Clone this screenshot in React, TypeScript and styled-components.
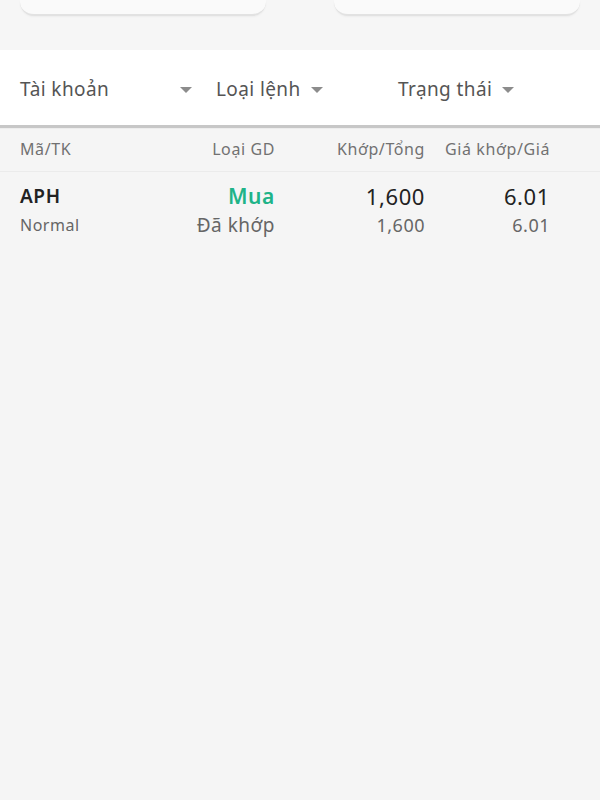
import React from "react"
import styled, { createGlobalStyle } from "styled-components"

const GlobalStyle = createGlobalStyle`
    html, body {
        margin: 0;
        padding: 0;
        background: #f5f5f5;
    }
    body {
        font-family: "Noto Sans", "Open Sans", sans-serif;
    }
`

const Page = styled.div({
    width: "600px",
    minHeight: "800px",
    backgroundColor: "#f5f5f5",
    display: "flex",
    flexDirection: "column"
})

const SearchArea = styled.div({
    height: "50px",
    backgroundColor: "#f6f6f6",
    display: "flex",
    justifyContent: "space-between",
    padding: "0 20px 0 20px",
    boxSizing: "border-box"
})

const SearchBox = styled.div({
    width: "246px",
    height: "14px",
    backgroundColor: "#fafafa",
    borderBottom: "2px solid #e2e2e2",
    borderRadius: "0 0 14px 14px",
    boxShadow: "0 1px 2px rgba(0, 0, 0, 0.04)"
})

const FilterBar = styled.div({
    height: "78px",
    backgroundColor: "#ffffff",
    borderBottom: "3px solid #c7c7c7",
    display: "flex",
    alignItems: "center",
    paddingTop: "3px",
    boxSizing: "border-box"
})

const Filter = styled.div<{ width: number, spread?: boolean, start: number }>(({ width, spread, start }) => ({
    width: `${width}px`,
    paddingLeft: `${start}px`,
    boxSizing: "border-box",
    display: "flex",
    alignItems: "center",
    justifyContent: spread ? "space-between" : "flex-start",
    gap: "10px",
    color: "#555",
    fontSize: "19px",
    letterSpacing: "0.4px"
}))

const Caret = styled.span({
    width: 0,
    height: 0,
    borderLeft: "6px solid transparent",
    borderRight: "6px solid transparent",
    borderTop: "6px solid #8c8c8c",
    marginTop: "1px"
})

const Grid = styled.div({
    display: "grid",
    gridTemplateColumns: "1fr 110px 150px 125px",
    padding: "0 50px 0 20px"
})

const HeaderRow = styled(Grid)({
    height: "40px",
    alignItems: "center",
    borderTop: "1px solid #ededed",
    borderBottom: "1px solid #ebebeb",
    color: "#717171",
    fontSize: "16px",
    letterSpacing: "0.6px",
    paddingBottom: "2px"
})

const Cell = styled.div<{ right?: boolean }>(({ right }) => ({
    textAlign: right ? "right" : "left",
    whiteSpace: "nowrap"
}))

const DataRow = styled(Grid)({
    paddingTop: "11px"
})

const Stack = styled.div<{ right?: boolean }>(({ right }) => ({
    display: "flex",
    flexDirection: "column",
    alignItems: right ? "flex-end" : "flex-start",
    gap: "4px"
}))

const Primary = styled.span<{ bold?: boolean, color?: string, size?: number }>(({ bold, color, size }) => ({
    fontSize: `${size || 22}px`,
    fontWeight: bold ? 600 : 400,
    color: color || "#222",
    lineHeight: "26px",
    letterSpacing: "0.6px"
}))

const Secondary = styled.span<{ size?: number }>(({ size }) => ({
    fontSize: `${size || 18}px`,
    color: "#666",
    lineHeight: "24px",
    letterSpacing: "0.5px"
}))

const App: React.FC = () => {
    return (
        <Page>
            <GlobalStyle />
            <SearchArea>
                <SearchBox />
                <SearchBox />
            </SearchArea>
            <FilterBar>
                <Filter width={200} start={20} spread style={{ paddingRight: "8px" }}>
                    <span>Tài khoản</span>
                    <Caret />
                </Filter>
                <Filter width={198} start={16}>
                    <span>Loại lệnh</span>
                    <Caret />
                </Filter>
                <Filter width={202} start={0}>
                    <span>Trạng thái</span>
                    <Caret />
                </Filter>
            </FilterBar>
            <HeaderRow>
                <Cell>Mã/TK</Cell>
                <Cell right>Loại GD</Cell>
                <Cell right>Khớp/Tổng</Cell>
                <Cell right>Giá khớp/Giá</Cell>
            </HeaderRow>
            <DataRow>
                <Stack>
                    <Primary bold size={19}>APH</Primary>
                    <Secondary size={16}>Normal</Secondary>
                </Stack>
                <Stack right>
                    <Primary bold color="#20b388" size={21}>Mua</Primary>
                    <Secondary size={19}>Đã khớp</Secondary>
                </Stack>
                <Stack right>
                    <Primary>1,600</Primary>
                    <Secondary>1,600</Secondary>
                </Stack>
                <Stack right>
                    <Primary>6.01</Primary>
                    <Secondary>6.01</Secondary>
                </Stack>
            </DataRow>
        </Page>
    )
}

export default App
